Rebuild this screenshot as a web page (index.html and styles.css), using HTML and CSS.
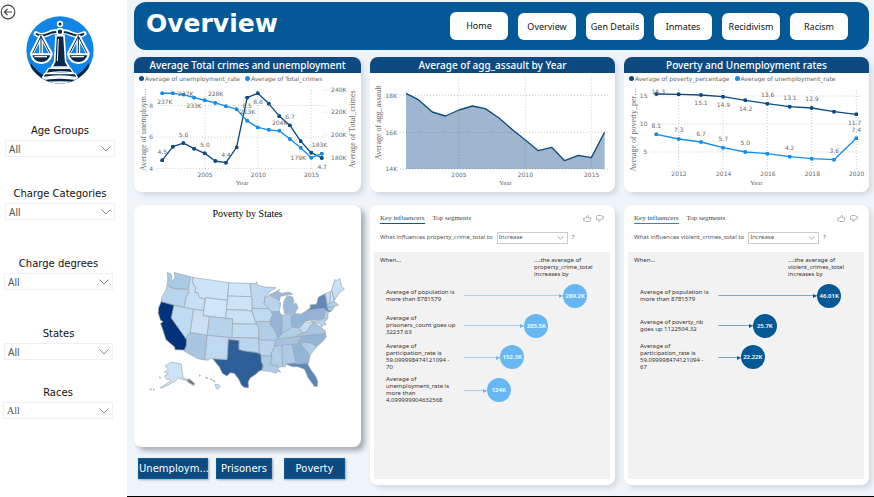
FILE: index.html
```html
<!DOCTYPE html>
<html lang="en">
<head>
<meta charset="utf-8">
<title>Overview</title>
<link rel="stylesheet" href="styles.css">
</head>
<body>
<div class="app">
  <aside class="sidebar">
    <button class="back" aria-label="Back">
      <svg viewBox="0 0 16 16"><circle cx="8" cy="8" r="6.8"/><path d="M12 8H4.5M7.6 4.8 4.4 8l3.2 3.2"/></svg>
    </button>
    <svg class="logo" viewBox="78 49 204 204" role="img" aria-label="Scales of justice">
      <defs><clipPath id="disc"><circle cx="180" cy="151" r="101"/></clipPath></defs>
      <circle cx="180" cy="151" r="101" fill="#0f86e6"/>
      <g clip-path="url(#disc)">
        <path d="M92 190q26 34 44 38h88q24-8 42-38l6 66H90z" fill="#0b2748"/>
        <path d="M128 236q50-12 104 0l14 20H116z" fill="#f4f8fb"/>
        <path d="M124 242q54-10 112 0v7q-60-8-112 0z" fill="#0b2748"/>
        <path d="M134 222h92l6 12q-54-10-104 0z" fill="#0b2748" stroke="#fff" stroke-width="4"/>
        <path d="M146 206h66l8 14q-46-8-84 2z" fill="#0b2748" stroke="#fff" stroke-width="4"/>
        <path d="M168 108h24l5 78 10 16h-52l9-16z" fill="#0b2748" stroke="#fff" stroke-width="5"/>
        <path d="M175 118l-3 66" stroke="#fff" stroke-width="3"/>
        <path d="M108 102q14 10 32 2 18-10 38-8 22-2 40 8 18 8 34-2" fill="none" stroke="#fff" stroke-width="15" stroke-linecap="round"/>
        <path d="M110 103q14 8 30 1 18-9 38-8 22-1 40 8 16 7 32-1" fill="none" stroke="#0b2748" stroke-width="6" stroke-linecap="round"/>
        <circle cx="180" cy="73" r="7" fill="#0b2748" stroke="#fff" stroke-width="5"/>
        <circle cx="180" cy="96" r="9" fill="#0b2748" stroke="#fff" stroke-width="5"/>
        <path d="M123 108 95 162M123 108v54M123 108l30 54M235 108l-29 54M235 108v54M235 108l29 54" stroke="#fff" stroke-width="11"/>
        <path d="M123 110 97 162M123 110v50M123 110l28 52M235 110l-27 52M235 110v50M235 110l27 52" stroke="#0b2748" stroke-width="3"/>
        <path d="M93 164h62q-6 26-31 26t-31-26zM204 164h62q-6 26-31 26t-31-26z" fill="#0b2748" stroke="#fff" stroke-width="6"/>
        <path d="M103 171h38M214 171h38" stroke="#fff" stroke-width="4"/>
      </g>
    </svg>

    <div class="filter">
      <label for="age">Age Groups</label>
      <select id="age"><option>All</option></select>
    </div>
    <div class="filter">
      <label for="category">Charge Categories</label>
      <select id="category"><option>All</option></select>
    </div>
    <div class="filter filter-wide">
      <label for="degree">Charge degrees</label>
      <select id="degree"><option>All</option></select>
    </div>
    <div class="filter filter-wide">
      <label for="state">States</label>
      <select id="state"><option>All</option></select>
    </div>
    <div class="filter filter-last">
      <label for="race">Races</label>
      <select id="race"><option>All</option></select>
    </div>
  </aside>

  <main class="main">
    <header class="header">
      <h1>Overview</h1>
      <nav class="nav">
        <a href="#home" class="tall">Home</a>
        <a href="#overview">Overview</a>
        <a href="#gen-details">Gen Details</a>
        <a href="#inmates">Inmates</a>
        <a href="#recidivism">Recidivism</a>
        <a href="#racism">Racism</a>
      </nav>
    </header>

    <div class="columns">
      <section class="card chart">
        <h2>Average Total crimes and unemployment</h2>
        <div class="legend"><span class="key navy">Average of unemployment_rate</span><span class="key blue">Average of Total_crimes</span></div>
        <svg class="plot" viewBox="12 99 684 327">
          <defs>
            <marker id="dotNavy" viewBox="-6 -6 12 12" markerWidth="12" markerHeight="12" markerUnits="userSpaceOnUse"><circle r="6" fill="#0c4a80"/></marker>
            <marker id="dotBlue" viewBox="-6 -6 12 12" markerWidth="12" markerHeight="12" markerUnits="userSpaceOnUse"><circle r="6" fill="#118dee"/></marker>
          </defs>
          <path class="grid" d="M82 167H594M82 262H594M82 357H594M226 120V357M385 120V357M546 120V357M582 120H594M582 187H594M582 255H594M582 325H594"/>
          <polyline class="line navy-line" points="97,332 129,291 161,280 193,297 225,311 257,334 289,339 321,293 353,143 385,130 418,161 450,199 482,227 514,274 546,309 578,325"/>
          <polyline class="line blue-line" points="97,130 129,130 161,134 193,143 225,151 257,159 289,169 321,178 353,213 385,233 418,240 450,243 482,268 514,294 546,324 578,312"/>
          <g class="num">
            <text x="64" y="174">8</text><text x="64" y="269">6</text><text x="64" y="364">4</text>
            <text x="226" y="381">2005</text><text x="387" y="381">2010</text><text x="547" y="381">2015</text>
            <text x="629" y="126">240K</text><text x="629" y="193">220K</text><text x="629" y="262">200K</text><text x="629" y="331">180K</text>
          </g>
          <g class="num value">
            <text x="105" y="162">237K</text><text x="168" y="138">237K</text><text x="193" y="174">233K</text><text x="258" y="138">228K</text>
            <text x="353" y="174">8.5</text><text x="354" y="192">213K</text><text x="386" y="162">8.8</text><text x="451" y="225">204K</text><text x="482" y="207">6.7</text>
            <text x="97" y="312">4.5</text><text x="161" y="261">5.6</text><text x="226" y="291">5.0</text><text x="289" y="321">4.4</text>
            <text x="507" y="330">179K</text><text x="571" y="291">183K</text><text x="579" y="357">4.7</text>
          </g>
          <g class="axis">
            <text x="338" y="405">Year</text>
            <text transform="translate(47 239) rotate(-90)">Average of unemploym…</text>
            <text transform="translate(679 239) rotate(-90)">Average of Total_crimes</text>
          </g>
        </svg>
      </section>

      <section class="card chart">
        <h2>Average of agg_assault by Year</h2>
        <svg class="plot" viewBox="12 69 735 357">
          <path d="M120 130 157 149 199 186 238 198 279 180 319 168 358 176 399 204 437 237 478 270 517 302 557 292 596 332 637 316 676 323 716 246V357H120z" fill="#9eb7ce"/>
          <path class="grid" d="M102 136H728M102 247H728M102 357H728M278 80V357M478 80V357M676 80V357"/>
          <polyline class="line navy-edge" points="120,130 157,149 199,186 238,198 279,180 319,168 358,176 399,204 437,237 478,270 517,302 557,292 596,332 637,316 676,323 716,246"/>
          <g class="num">
            <text x="76" y="143">18K</text><text x="76" y="254">16K</text><text x="76" y="364">14K</text>
            <text x="279" y="381">2005</text><text x="478" y="381">2010</text><text x="677" y="381">2015</text>
          </g>
          <g class="axis">
            <text x="418" y="405">Year</text>
            <text transform="translate(46 218) rotate(-90)">Average of agg_assault</text>
          </g>
        </svg>
      </section>

      <section class="card chart">
        <h2>Poverty and Unemployment rates</h2>
        <div class="legend"><span class="key navy">Average of poverty_percentage</span><span class="key blue">Average of unemployment_rate</span></div>
        <svg class="plot" viewBox="12 99 735 327">
          <path class="grid" d="M94 138H724M94 222H724M94 306H724M176 120V357M309 120V357M442 120V357M575 120V357M709 120V357"/>
          <polyline class="line navy-line" points="109,132 176,133 243,135 309,140 376,151 442,161 509,170 575,174 642,185 709,193"/>
          <polyline class="line blue-line" points="109,253 176,267 243,276 309,293 376,306 442,311 509,320 575,326 642,329 709,265"/>
          <g class="num">
            <text x="71" y="145">15</text><text x="71" y="229">10</text><text x="76" y="313">5</text>
            <text x="177" y="378">2012</text><text x="311" y="378">2014</text><text x="444" y="378">2016</text><text x="577" y="378">2018</text><text x="710" y="378">2020</text>
          </g>
          <g class="num value">
            <text x="115" y="132">15.3</text><text x="243" y="165">15.1</text><text x="310" y="171">14.9</text><text x="377" y="184">14.2</text><text x="443" y="141">13.6</text><text x="510" y="150">13.1</text><text x="576" y="153">12.9</text><text x="704" y="226">11.7</text>
            <text x="109" y="234">8.1</text><text x="176" y="246">7.3</text><text x="243" y="258">6.7</text><text x="310" y="273">5.7</text><text x="376" y="285">5.0</text><text x="509" y="300">4.2</text><text x="643" y="309">3.6</text><text x="709" y="246">7.4</text>
          </g>
          <g class="axis">
            <text x="409" y="405">Year</text>
            <text transform="translate(49 239) rotate(-90)">Average of poverty_per…</text>
          </g>
        </svg>
      </section>

      <div class="map-column">
        <section class="card map">
          <h3>Poverty by States</h3>
          <svg viewBox="-48 -111 684 675" role="img" aria-label="Map of poverty by state">
            <g class="states">
              <path fill="#aac9e4" d="M52 38 62 42 66 50 64 60 70 62 76 52 73 38 122 51 116 90 100 88 80 88 62 84 58 78 52 76 54 60z"/>
              <path fill="#b9d5ed" d="M52 76 58 78 62 84 80 88 100 88 116 90 118 96 108 116 104 144 34 126 36 112 48 92z"/>
              <path fill="#c8e0f5" d="M122 51 130 53 128 66 138 84 136 98 144 98 150 114 166 118 161 153 104 144 108 116 118 96 116 90z"/>
              <path fill="#cde4f8" d="M130 53 238 69 233 122 168 114 166 118 150 114 144 98 136 98 138 84 128 66z"/>
              <path fill="#cfe6fa" d="M168 114 233 122 228 176 160 168z"/>
              <path fill="#cfe6fa" d="M238 69 302 71 306 111 235 109z"/>
              <path fill="#cde4f8" d="M235 109 306 111 308 118 308 154 292 152 231 150z"/>
              <path fill="#c9e1f6" d="M231 150 292 152 308 156 318 188 322 194 248 193 249 178 228 176z"/>
              <path fill="#c1dbf1" d="M248 193 322 194 328 204 328 236 246 234z"/>
              <path fill="#bad5ed" d="M236 233 246 234 328 236 330 281 318 279 300 277 280 274 268 270 268 243 236 240z"/>
              <path fill="#2f5f98" d="M236 240 268 243 268 270 280 274 300 277 318 279 334 283 336 306 341 318 338 332 328 336 320 344 302 356 296 368 297 386 284 384 276 378 268 360 254 342 242 340 232 350 218 342 210 324 191 300 191 298 232 300z"/>
              <path fill="#bfdaf0" d="M172 227 236 233 236 240 232 300 191 298 178 298 177 302 165 302z"/>
              <path fill="#a8c6e2" d="M117 219 172 227 165 302 144 298 102 274 110 256 107 238z"/>
              <path fill="#b7d3eb" d="M179 171 249 178 247 234 172 227z"/>
              <path fill="#cddff4" d="M131 149 161 153 160 168 179 171 172 227 121 219z"/>
              <path fill="#c0dbf1" d="M72 137 131 149 121 219 117 222 107 238 64 175z"/>
              <path fill="#00337a" d="M34 126 72 137 64 175 110 240 110 256 104 272 76 271 74 262 62 252 48 240 38 208 32 192 40 186 32 182 30 176 25 160 26 145z"/>
              <path fill="#bdd8ef" d="M302 71 320 71 321 66 325 76 345 82 380 84 364 94 346 112 346 124 344 132 360 148 308 146 308 118 306 111z"/>
              <path fill="#bfdaf0" d="M308 146 360 148 370 164 362 186 318 187 308 156z"/>
              <path fill="#b0cee8" d="M318 187 362 186 364 196 376 212 386 228 380 244 374 242 328 241 328 204z"/>
              <path fill="#b9d4ec" d="M328 241 378 244 378 256 366 280 366 290 336 290 334 283 330 281z"/>
              <path fill="#aecbe6" d="M336 290 366 290 368 302 362 316 384 318 386 328 394 338 386 336 380 342 362 336 340 334 341 318 336 306z"/>
              <path fill="#b8d3ec" d="M346 112 358 108 380 116 390 122 388 134 394 128 390 156 366 157 360 148 344 132 346 124z"/>
              <path fill="#9bbadb" d="M358 106 378 97 392 89 386 98 400 101 420 97 430 104 410 106 394 110 390 122 380 114z"/>
              <path fill="#9bbadb" d="M406 162 402 142 404 124 414 108 430 112 434 126 430 136 440 130 446 144 436 162z"/>
              <path fill="#94b4d7" d="M366 157 390 156 396 166 400 208 396 230 386 236 376 212 364 196 362 186 370 164z"/>
              <path fill="#abc9e4" d="M398 166 426 164 428 200 416 212 398 222z"/>
              <path fill="#94b4d7" d="M426 166 440 162 454 164 468 156 470 180 460 196 450 206 440 204 428 200z"/>
              <path fill="#b2cfe8" d="M384 238 398 222 416 212 428 202 450 206 458 220 440 232z"/>
              <path fill="#a6c4e1" d="M380 240 440 232 462 229 442 248 430 254 374 260z"/>
              <path fill="#b2cfe8" d="M378 260 398 258 400 322 386 324 384 318 362 316 368 302 366 280z"/>
              <path fill="#aecbe6" d="M398 258 428 255 438 296 438 311 410 314 408 322 400 322z"/>
              <path fill="#94b4d7" d="M428 255 454 250 482 288 478 312 440 314 438 296z"/>
              <path fill="#5b86b6" d="M410 314 438 311 440 314 474 312 484 330 500 352 506 368 504 382 496 382 476 354 466 330 446 322 430 322z"/>
              <path fill="#b0cee8" d="M454 252 470 248 486 250 502 262 482 288z"/>
              <path fill="#94b4d7" d="M442 250 462 229 528 222 532 232 520 246 502 262 486 250 470 248z"/>
              <path fill="#a8c6e2" d="M440 232 458 220 470 218 484 196 496 190 514 202 528 214 530 222 462 229z"/>
              <path fill="#c4def4" d="M454 212 458 198 470 182 474 188 496 188 484 198 472 216 460 220z"/>
              <path fill="#94b4d7" d="M468 156 474 152 524 146 532 156 528 170 524 178 470 184z"/>
              <path fill="#6289b8" d="M474 152 484 144 482 136 502 134 508 112 528 102 536 146 548 154 538 158 524 146z"/>
              <path fill="#b0cee8" d="M528 152 537 156 536 176 530 184 525 174z"/>
              <path fill="#b8d4ec" d="M486 186 524 180 531 196 522 196 518 202 510 192z"/>
              <path fill="#c8e0f5" d="M528 102 544 96 542 132 536 134z"/>
              <path fill="#c8e0f5" d="M544 96 548 90 556 124 542 132z"/>
              <path fill="#c8e0f5" d="M548 90 556 60 564 62 572 56 578 80 586 88 570 100 556 122z"/>
              <path fill="#b0cee8" d="M536 134 556 126 568 136 556 140 536 144z"/>
              <path fill="#b0cee8" d="M536 144 556 140 552 150 538 154z"/>
              <path fill="#cde4f8" d="M66 308 94 314 100 356 112 360 134 374 130 378 104 362 84 356 76 366 36 386 30 386 62 366 60 360 50 360 44 350 56 344 44 338 56 330 46 320z"/>
              <path fill="#777" d="M112 360 120 360 134 372 132 378 116 368z"/>
              <path fill="#c4def4" d="M28 353 32 354 31 357zM0 389 6 390 2 392zM10 389 14 391 10 392zM149 347 153 349 150 351zM168 353 175 356 170 358zM182 358 188 361 184 362zM190 362 197 366 193 368zM197 374 206 376 212 382 204 390 199 386z"/>
            </g>
          </svg>
        </section>
        <div class="switches">
          <button class="w-long">Unemploym...</button>
          <button class="w-short">Prisoners</button>
          <button class="w-mid">Poverty</button>
        </div>
      </div>

      <section class="card influencers sky">
        <div class="tabs">
          <button class="active">Key influencers</button>
          <button>Top segments</button>
          <span class="thumbs">
            <svg viewBox="0 0 24 20"><path d="M2 9h5l5-7q3 0 2 3l-1 3h8q1 0 0 2l-2 7q-1 1-2 1H8l-2-2H2z"/></svg>
            <svg viewBox="0 0 24 20"><path d="M22 11h-5l-5 7q-3 0-2-3l1-3H3q-1 0 0-2l2-7q1-1 2-1h9l2 2h4z"/></svg>
          </span>
        </div>
        <div class="question">
          <label for="property">What influences property_crime_total to</label>
          <select id="property"><option>Increase</option></select><span>?</span>
        </div>
        <div class="panel">
          <div class="heads"><span>When...</span><span class="effect">....the average of<br>property_crime_total<br>increases by</span></div>
          <div class="row"><p>Average of population is<br>more than 8781579</p><div class="track"><i class="arrow" style="width:74%"></i><b>289.2K</b></div></div>
          <div class="row"><p>Average of<br>prisoners_count goes up<br>32237.63</p><div class="track"><i class="arrow" style="width:45%"></i><b>205.5K</b></div></div>
          <div class="row"><p>Average of<br>participation_rate is<br>59.099998474121094 -<br>70</p><div class="track"><i class="arrow" style="width:27%"></i><b>152.3K</b></div></div>
          <div class="row"><p>Average of<br>unemployment_rate is<br>more than<br>4.099999904632568</p><div class="track"><i class="arrow" style="width:17%"></i><b>124K</b></div></div>
        </div>
      </section>

      <section class="card influencers deep">
        <div class="tabs">
          <button class="active">Key influencers</button>
          <button>Top segments</button>
          <span class="thumbs">
            <svg viewBox="0 0 24 20"><path d="M2 9h5l5-7q3 0 2 3l-1 3h8q1 0 0 2l-2 7q-1 1-2 1H8l-2-2H2z"/></svg>
            <svg viewBox="0 0 24 20"><path d="M22 11h-5l-5 7q-3 0-2-3l1-3H3q-1 0 0-2l2-7q1-1 2-1h9l2 2h4z"/></svg>
          </span>
        </div>
        <div class="question">
          <label for="violent">What influences violent_crimes_total to</label>
          <select id="violent"><option>Increase</option></select><span>?</span>
        </div>
        <div class="panel">
          <div class="heads"><span>When...</span><span class="effect">....the average of<br>violent_crimes_total<br>increases by</span></div>
          <div class="row"><p>Average of population is<br>more than 8781579</p><div class="track"><i class="arrow" style="width:74%"></i><b>46.01K</b></div></div>
          <div class="row"><p>Average of poverty_nb<br>goes up 1122504.32</p><div class="track"><i class="arrow" style="width:26%"></i><b>25.7K</b></div></div>
          <div class="row"><p>Average of<br>participation_rate is<br>59.099998474121094 -<br>67</p><div class="track"><i class="arrow" style="width:17%"></i><b>22.22K</b></div></div>
        </div>
      </section>
    </div>
  </main>
</div>
</body>
</html>
```
FILE: styles.css
```css
* { box-sizing: border-box; }
body { margin: 0; font-family: "Noto Sans", sans-serif; color: #252423; background: #eff4f9; }
h1, h2, h3, p { margin: 0; font-weight: 400; }
button, select { font: inherit; color: inherit; margin: 0; border-radius: 0; }
svg { display: block; }

.app { display: grid; grid-template-columns: 127px 1fr; min-height: 100vh; }

/* Sidebar */
.sidebar { background: #fff; }
.back { display: block; width: 16px; height: 16px; margin: 4px 0 0; padding: 0; border: 0; background: none; }
.back svg { width: 16px; height: 16px; fill: none; stroke: #444; stroke-width: 1.2; }
.logo { width: 68px; height: 68px; margin: -4px 0 0 26px; }
.filter { width: 110px; margin: 30px 0 0 5px; }
.logo + .filter { margin-top: 40px; }
.filter-wide { width: 109px; margin: 37px 0 0 4px; }
.filter-last { margin: 26px 0 0 3px; }
.filter label { display: block; font: 10px/14px "DejaVu Sans", sans-serif; text-align: center; margin-bottom: 2px; color: #111; }
.filter select { display: block; width: 100%; height: 17px; padding: 0 3px; border: 1px solid #eef1f3; font-size: 10px; color: #555; }
.filter-last select { font-family: "Liberation Serif", serif; }
select {
  appearance: none;
  background: #fff url("data:image/svg+xml,%3Csvg xmlns='http://www.w3.org/2000/svg' viewBox='0 0 10 6'%3E%3Cpath d='M.5.5 5 5 9.5.5' fill='none' stroke='%23888'/%3E%3C/svg%3E") no-repeat right 3px center / 10px 6px;
}

/* Page */
.main { padding: 2px 5px 0 7px; border-bottom: 1px solid #000; }
.header { display: flex; align-items: center; justify-content: space-between; height: 48px; padding: 0 21px 0 12px; border-radius: 12px; background: #025996; }
.header h1 { font: bold 25px/30px "DejaVu Sans", sans-serif; color: #fff; padding-bottom: 4px; }
.nav { display: flex; align-items: flex-end; gap: 10px; }
.nav a { width: 58px; height: 27px; border-radius: 6px; background: #fff; color: #111; font-size: 9px; line-height: 27px; text-align: center; text-decoration: none; white-space: nowrap; }
.nav .tall { height: 28px; }

.columns { display: grid; grid-template-columns: 227fr 245fr 245fr; gap: 13px 9px; margin-top: 7px; align-items: start; }
.card { background: #fff; border-radius: 8px; box-shadow: 3px 3px 5px #d3dade; min-width: 0; }

/* Charts */
.chart { overflow: hidden; }
.chart h2 { height: 16px; background: #0c4a80; color: #fff; font-size: 10px; font-weight: 500; line-height: 16px; text-align: center; white-space: nowrap; }
.legend { display: flex; gap: 5px; height: 10px; padding: 1px 5px 0; font: 6px/10px "DejaVu Sans", sans-serif; color: #666; white-space: nowrap; }
.key { display: flex; align-items: center; gap: 1px; }
.key::before { content: ""; width: 5px; height: 5px; border-radius: 50%; }
.navy::before { background: #0c4a80; }
.blue::before { background: #118dee; }
.plot { width: 100%; }
.grid { fill: none; stroke: #000; stroke-opacity: .2; stroke-width: 3; stroke-dasharray: 3 6; }
.line { fill: none; stroke-width: 4; stroke-linejoin: round; }
.navy-line { stroke: #0c4a80; marker: url(#dotNavy); }
.blue-line { stroke: #118dee; marker: url(#dotBlue); }
.navy-edge { stroke: #0c4a80; }
.plot text { text-anchor: middle; fill: #6b6b6b; }
.num { font: 18px "DejaVu Sans", sans-serif; }
.axis { font: 24px "Liberation Serif", serif; }
.axis text:first-child { font-size: 21px; }

/* Map */
.map { overflow: hidden; box-shadow: 4px 4px 5px #a9b0b5; }
.map h3 { height: 18px; font: 10px/18px "Liberation Serif", serif; color: #000; text-align: center; }
.map svg { width: 100%; }
.states { stroke: #9ba5ae; stroke-width: 2; stroke-linejoin: round; }
.switches { display: flex; padding: 11px 0 0 4px; }
.switches button { height: 21px; padding: 0; border: 1px solid #075c9c; background: #0c4a80; color: #fff; font: 10px/19px "DejaVu Sans", sans-serif; text-align: center; white-space: nowrap; box-shadow: 1px 1px 2px #9aa4ac; }
.w-long { width: 70px; margin-right: 8px; }
.w-short { width: 56px; margin-right: 12px; }
.w-mid { width: 61px; }

/* Key influencers */
.influencers { padding: 9px 5px 6px 4px; font-size: 6px; line-height: 7px; }
.tabs { display: flex; gap: 8px; height: 10px; padding: 0 6px; }
.tabs button { padding: 0; border: 0; border-bottom: 1px solid transparent; background: none; font: 7px/9px "Liberation Serif", serif; color: #444; }
.sky .active { border-color: #025996; }
.deep .active { border-color: #118dee; }
.thumbs { display: flex; gap: 3px; margin-left: auto; }
.thumbs svg { width: 9px; height: 9px; fill: none; stroke: #999; stroke-width: 2; }
.question { display: flex; align-items: center; gap: 4px; height: 13px; margin: 7px 6px 8px; color: #555; white-space: nowrap; }
.question select { width: 71px; height: 12px; padding: 0 1px; border: 1px solid #ccc; background-size: 7px 4px; }
.panel { display: flex; flex-direction: column; gap: 5px; min-height: 227px; padding: 5px 12px 0; background: #f2f2f2; color: #333; }
.heads { display: flex; justify-content: space-between; margin-left: -6px; }
.effect { width: 64px; white-space: nowrap; }
.row { display: flex; align-items: center; min-height: 25px; }
.row p { width: 78px; white-space: nowrap; }
.track { display: flex; align-items: center; flex: 1; }
.arrow { position: relative; height: 1px; background: var(--line); }
.arrow::after { content: ""; position: absolute; right: 0; top: -1px; border-left: 4px solid var(--tip); border-top: 2px solid transparent; border-bottom: 2px solid transparent; }
.track b { width: 24px; height: 24px; flex: none; border-radius: 50%; background: var(--tip); color: #fff; font-size: 6px; font-weight: 600; line-height: 24px; text-align: center; }
.sky { --line: #a9d4f7; --tip: #67b7f3; }
.deep { --line: #7ba9cc; --tip: #025996; }
```
